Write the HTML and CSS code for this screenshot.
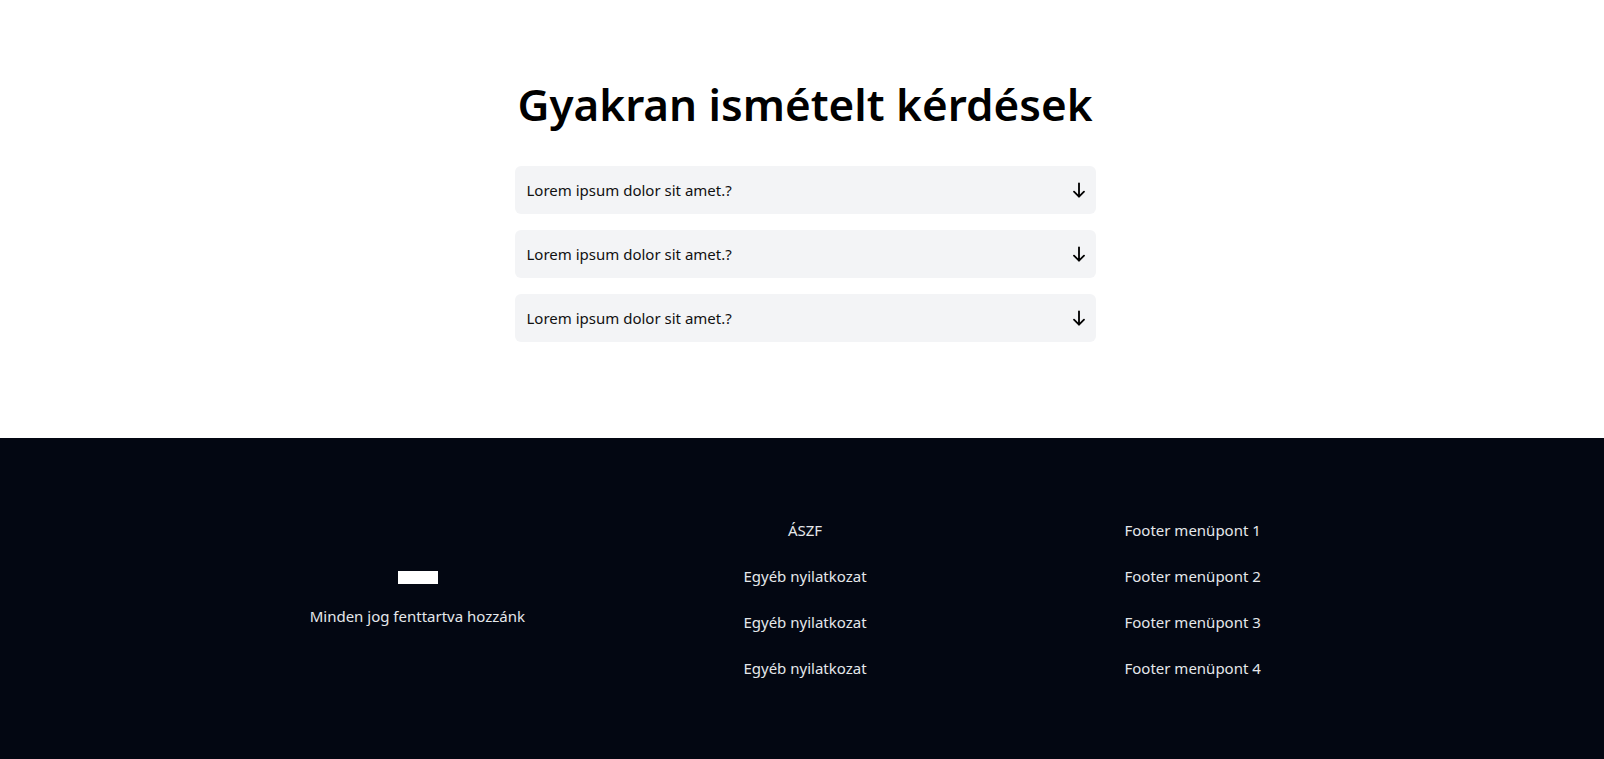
FILE: index.html
```html
<!DOCTYPE html>
<html lang="hu">
<head>
<meta charset="utf-8">
<title>GYIK</title>
<link rel="stylesheet" href="styles.css">
</head>
<body>
<main class="page">
  <section class="faq">
    <h1 class="faq-title">Gyakran ismételt kérdések</h1>
    <div class="faq-list">
      <div class="faq-item">
        <span class="faq-q">Lorem ipsum dolor sit amet.?</span>
        <svg class="faq-icon" viewBox="0 0 24 24" fill="none" stroke="currentColor" stroke-width="2.2" stroke-linecap="round" stroke-linejoin="round"><path d="M12 4v16M6 14l6 6 6-6"/></svg>
      </div>
      <div class="faq-item">
        <span class="faq-q">Lorem ipsum dolor sit amet.?</span>
        <svg class="faq-icon" viewBox="0 0 24 24" fill="none" stroke="currentColor" stroke-width="2.2" stroke-linecap="round" stroke-linejoin="round"><path d="M12 4v16M6 14l6 6 6-6"/></svg>
      </div>
      <div class="faq-item">
        <span class="faq-q">Lorem ipsum dolor sit amet.?</span>
        <svg class="faq-icon" viewBox="0 0 24 24" fill="none" stroke="currentColor" stroke-width="2.2" stroke-linecap="round" stroke-linejoin="round"><path d="M12 4v16M6 14l6 6 6-6"/></svg>
      </div>
    </div>
  </section>
  <footer class="footer">
    <div class="footer-grid">
      <div class="footer-brand">
        <div class="footer-logo"></div>
        <p class="footer-copy">Minden jog fenttartva hozzánk</p>
      </div>
      <ul class="footer-links center">
        <li>ÁSZF</li>
        <li>Egyéb nyilatkozat</li>
        <li>Egyéb nyilatkozat</li>
        <li>Egyéb nyilatkozat</li>
      </ul>
      <ul class="footer-links">
        <li>Footer menüpont 1</li>
        <li>Footer menüpont 2</li>
        <li>Footer menüpont 3</li>
        <li>Footer menüpont 4</li>
      </ul>
    </div>
  </footer>
</main>
</body>
</html>
```

FILE: styles.css
```css
* { box-sizing: border-box; }
html, body { margin: 0; padding: 0; }
body {
  font-family: "Noto Sans", "Open Sans", sans-serif;
  background: #ffffff;
  color: #030712;
}
.page { padding-left: 6px; }
.faq {
  padding: 80px 0 96px;
  display: flex;
  flex-direction: column;
  align-items: center;
}
.faq-title {
  margin: 0 0 38px;
  font-size: 44px;
  line-height: 48px;
  font-weight: 600;
  color: #000;
}
.faq-list {
  width: 581px;
  display: flex;
  flex-direction: column;
  gap: 16px;
}
.faq-item {
  height: 48px;
  padding: 0 12px;
  background: #f3f4f6;
  border-radius: 6px;
  display: flex;
  align-items: center;
  justify-content: space-between;
}
.faq-q { font-size: 15px; line-height: 24px; color: #111; }
.faq-icon { width: 20px; height: 20px; color: #000; margin-right: -5px; }
.footer {
  background: #030712;
  color: #e5e7eb;
  margin-left: -6px;
  padding: 80px 0 80px 6px;
}
.footer-grid {
  width: 1163px;
  margin: 0 auto;
  display: grid;
  grid-template-columns: repeat(3, 1fr);
  align-items: center;
}
.footer-brand {
  display: flex;
  flex-direction: column;
  align-items: center;
}
.footer-logo { width: 40px; height: 13px; background: #fff; margin-left: 2px; }
.footer-copy { margin: 20px 0 0; font-size: 15px; line-height: 24px; }
.footer-links {
  list-style: none;
  margin: 0;
  padding: 0;
  display: flex;
  flex-direction: column;
  align-items: center;
  gap: 22px;
  font-size: 15px;
  line-height: 24px;
}
```
